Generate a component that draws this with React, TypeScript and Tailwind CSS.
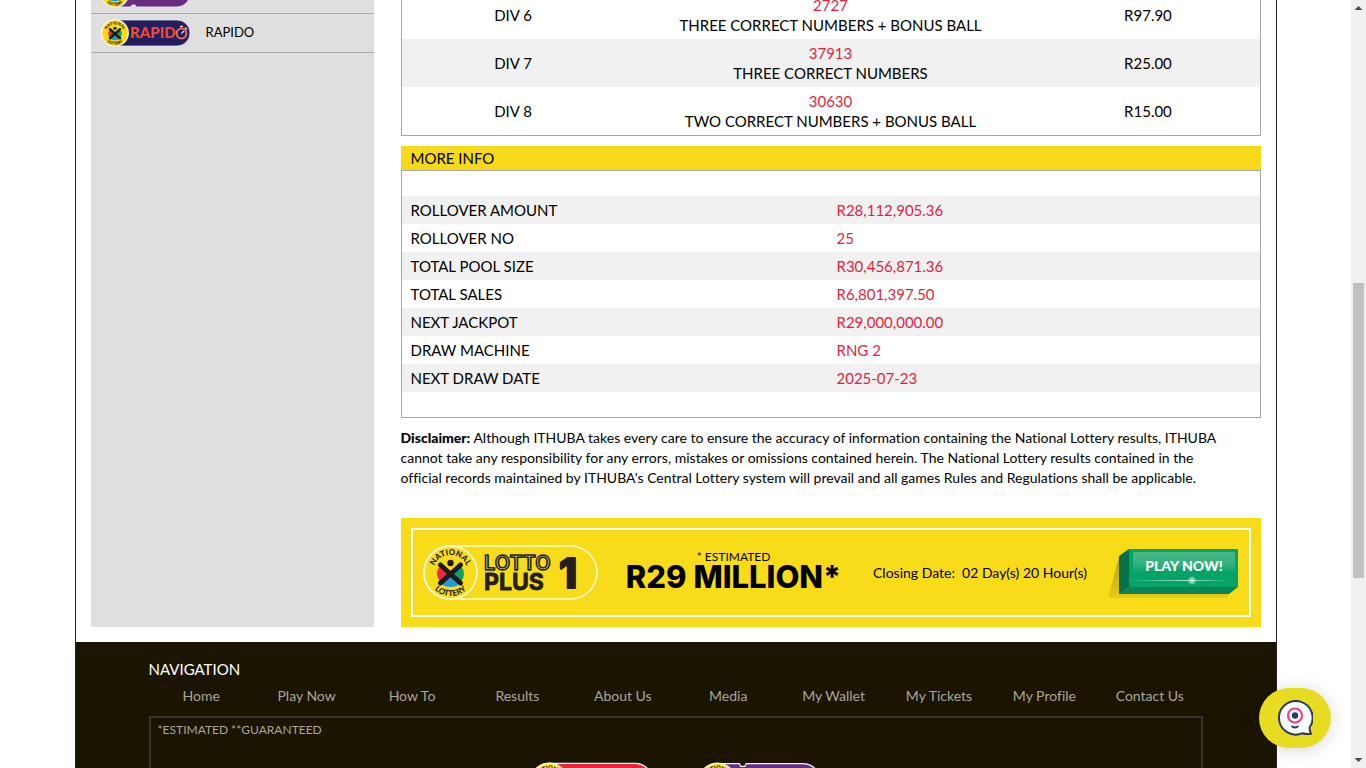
import React from "react";

const divisions = [
  { name: "DIV 6", winners: "2727", rule: "THREE CORRECT NUMBERS + BONUS BALL", prize: "R97.90" },
  { name: "DIV 7", winners: "37913", rule: "THREE CORRECT NUMBERS", prize: "R25.00" },
  { name: "DIV 8", winners: "30630", rule: "TWO CORRECT NUMBERS + BONUS BALL", prize: "R15.00" },
];

const info = [
  ["ROLLOVER AMOUNT", "R28,112,905.36"],
  ["ROLLOVER NO", "25"],
  ["TOTAL POOL SIZE", "R30,456,871.36"],
  ["TOTAL SALES", "R6,801,397.50"],
  ["NEXT JACKPOT", "R29,000,000.00"],
  ["DRAW MACHINE", "RNG 2"],
  ["NEXT DRAW DATE", "2025-07-23"],
];

const navItems = [
  "Home", "Play Now", "How To", "Results", "About Us",
  "Media", "My Wallet", "My Tickets", "My Profile", "Contact Us",
];

/* National Lottery emblem, drawn around the origin with a radius of 27. */
function Emblem({ id, fill, ring }: { id: string; fill: string; ring: number }) {
  return (
    <g>
      <circle r="26.5" fill={fill} stroke="#fffbe0" strokeWidth={ring} />
      <path d="M-2 1L-10-7Q-17 1-10 10Z" fill="#ee2a45" />
      <path d="M2 1L10-7Q17 1 10 10Z" fill="#0ba36b" />
      <path d="M0 4L-9 12Q0 17 9 12Z" fill="#1f9ad6" />
      <path d="M-10-7.5L10 10.5M10-7.5L-10 10.5" stroke="#1d1b1a" strokeWidth="5" strokeLinecap="round" />
      <circle cy="-9.5" r="3.2" fill="#1d1b1a" />
      <path id={`${id}-top`} d="M-17.5 0A17.5 17.5 0 0 1 17.5 0" fill="none" />
      <path id={`${id}-bottom`} d="M-23.5 0A23.5 23.5 0 0 0 23.5 0" fill="none" />
      <g fontFamily="Lato, sans-serif" fontWeight="900" fontSize="8" fill="#1d1b1a" textAnchor="middle">
        <text><textPath href={`#${id}-top`} startOffset="50%">NATIONAL</textPath></text>
        <text><textPath href={`#${id}-bottom`} startOffset="50%">LOTTERY</textPath></text>
      </g>
    </g>
  );
}

function RapidoLogo() {
  return (
    <svg className="h-[28px] w-[90px] shrink-0" viewBox="0 0 90 28" aria-label="Rapido">
      <path d="M14 1H76A13 13 0 0 1 76 27H14Z" fill="#231f5e" stroke="#f1eff5" strokeWidth=".7" />
      <g transform="translate(14 14) scale(.5)"><Emblem id="rapido" fill="#f7d917" ring={2.5} /></g>
      <text x="29" y="19" fontFamily="Lato, sans-serif" fontWeight="900" fontSize="15" fill="#f04a30">RAPID</text>
      <circle cx="80.5" cy="14.5" r="4.9" fill="none" stroke="#ee6a50" strokeWidth="2" />
      <path d="M79 7.5H82M84 8.5L86 10.5M80.5 14.5L83 12" stroke="#f3d5d0" strokeWidth="1.3" />
    </svg>
  );
}

function PurpleLogo({ id, className }: { id: string; className: string }) {
  return (
    <svg className={className} viewBox="0 0 90 28" aria-hidden="true">
      <path d="M14 1H30L31 3H34L35 1H76A13 13 0 0 1 76 27H35L34 25H31L30 27H14Z" fill="#662d83" stroke="#f1eff5" strokeWidth=".9" />
      <g transform="translate(14 14) scale(.5)"><Emblem id={id} fill="#f7d917" ring={2.5} /></g>
    </svg>
  );
}

function RedLogo({ className }: { className: string }) {
  return (
    <svg className={className} viewBox="0 0 90 28" aria-hidden="true">
      <rect x=".7" y=".9" width="88.6" height="26.2" rx="13.1" fill="#ea2236" stroke="#fff" strokeWidth=".9" />
      <g transform="translate(14 14) scale(.5)"><Emblem id="red" fill="#ffe512" ring={2.5} /></g>
    </svg>
  );
}

function LottoPlusLogo() {
  return (
    <svg className="h-[55px] w-[175px] shrink-0" viewBox="0 0 175 55" aria-label="Lotto Plus 1">
      <rect x="1" y="1" width="173" height="53" rx="26.5" fill="none" stroke="#fffbd5" strokeWidth="1.6" />
      <g transform="translate(27.5 27.5)"><Emblem id="lotto" fill="none" ring={1.6} /></g>
      <g fontFamily="Inter, sans-serif" stroke="#231f20" strokeLinejoin="round">
        <text x="61" y="24.5" fontSize="20" fontWeight="600" fill="#c9bd72" strokeWidth="1.5">LOTTO</text>
        <text x="61" y="44.5" fontSize="23" fontWeight="700" fill="#231f20" strokeWidth=".8">PLUS</text>
        <text x="136" y="43" fontSize="41" fontWeight="800" fill="#231f20" strokeWidth="2">1</text>
      </g>
    </svg>
  );
}

function PlayNow() {
  return (
    <button type="button" aria-label="Play now" className="shrink-0 cursor-pointer">
      <svg className="block h-[50px] w-[130px]" viewBox="0 0 130 50">
        <defs>
          <linearGradient id="play-shine" x2="0" y2="1">
            <stop stopColor="#49b98a" />
            <stop offset=".55" stopColor="#32b07c" />
            <stop offset="1" stopColor="#04a466" />
          </linearGradient>
          <linearGradient id="play-line">
            <stop stopColor="#fff" stopOpacity="0" />
            <stop offset=".6" stopColor="#fff" />
            <stop offset="1" stopColor="#fff" stopOpacity="0" />
          </linearGradient>
          <linearGradient id="play-shadow" x2="0" y2="1">
            <stop stopColor="#bd9d16" />
            <stop offset="1" stopColor="#e6cb18" />
          </linearGradient>
          <radialGradient id="play-glow">
            <stop stopColor="#fff" />
            <stop offset=".4" stopColor="#a5e6c9" stopOpacity=".8" />
            <stop offset="1" stopColor="#fff" stopOpacity="0" />
          </radialGradient>
        </defs>
        <path d="M10 9L-1 50H119V45Z" fill="url(#play-shadow)" />
        <path d="M20 1L10 8V46L20 39Z" fill="#06704a" />
        <path d="M20 39H129L120 46H10Z" fill="#0a8452" />
        <path d="M20 1H129V39H20Z" fill="#04a466" />
        <path d="M24 4H126V24Q75 18 24 26Z" fill="url(#play-shine)" />
        <rect x="16" y="32" width="106" height="1" fill="url(#play-line)" opacity=".7" />
        <circle cx="83" cy="32.5" r="4.5" fill="url(#play-glow)" />
        <text x="75" y="23" textAnchor="middle" fill="#fff" fontFamily="Lato, sans-serif" fontWeight="900" fontSize="14">PLAY NOW!</text>
      </svg>
    </button>
  );
}

function Scrollbar() {
  return (
    <div aria-hidden="true" className="flex w-[15px] shrink-0 flex-col items-center bg-[#f0f0f0]">
      <svg className="h-[15px] w-[15px] shrink-0" viewBox="0 0 15 15"><path d="M3.5 10L7.5 6L11.5 10Z" fill="#4d4d4d" /></svg>
      <div className="flex w-[11px] flex-1 flex-col">
        <div className="flex-[268]" />
        <div className="flex-[295] bg-[#c1c1c1]" />
        <div className="flex-[175]" />
      </div>
      <svg className="h-[15px] w-[15px] shrink-0" viewBox="0 0 15 15"><path d="M3.5 5L7.5 9L11.5 5Z" fill="#4d4d4d" /></svg>
    </div>
  );
}

export default function App() {
  return (
    <div className="flex h-screen overflow-hidden bg-white font-[Lato,sans-serif] text-black [font-variant-ligatures:none]">
      <div className="min-w-0 flex-1">
        <div className="mx-auto -mt-[26px] max-w-[1202px] border-x border-[#262626]">
          <div className="flex gap-[27px] px-[15px] pb-[15px]">
            <aside className="w-[283px] shrink-0 bg-[#dfdfdf] text-[13px]">
              <ul>
                <li className="flex h-[40px] items-center border-b border-[#aaa] px-[10px]">
                  <PurpleLogo id="side" className="h-[28px] w-[90px] shrink-0" />
                </li>
                <li className="border-b border-[#aaa]">
                  <a href="#rapido" className="flex h-[38px] items-center gap-[15px] px-[10px]">
                    <RapidoLogo />
                    RAPIDO
                  </a>
                </li>
              </ul>
            </aside>

            <main className="min-w-0 flex-1 pt-[17px]">
              <div className="border border-t-0 border-[#a6a6a6]">
                <table className="w-full table-fixed text-center text-[15px] leading-[20px]">
                  <tbody>
                    {divisions.map((d) => (
                      <tr key={d.name} className="h-[48px] even:bg-[#f1f1f1]">
                        <td className="w-[26%]">{d.name}</td>
                        <td>
                          <span className="block text-[#e21f3d]">{d.winners}</span>
                          {d.rule}
                        </td>
                        <td className="w-[26%]">{d.prize}</td>
                      </tr>
                    ))}
                  </tbody>
                </table>
              </div>

              <h2 className="mt-[10px] bg-[#f5d91a] px-[10px] text-[15px] leading-[24px]">MORE INFO</h2>
              <div className="border border-[#a6a6a6] py-[25px]">
                <table className="w-full table-fixed text-left text-[15px] leading-[20px]">
                  <tbody>
                    {info.map(([label, value]) => (
                      <tr key={label} className="h-[28px] odd:bg-[#f1f1f1]">
                        <th scope="row" className="w-1/2 pl-[9px] font-normal">{label}</th>
                        <td className="pl-[6px] text-[#e21f3d]">{value}</td>
                      </tr>
                    ))}
                  </tbody>
                </table>
              </div>

              <p className="mt-[10px] pr-[32px] text-[14px] leading-[20px]">
                <strong className="font-black">Disclaimer:</strong> Although ITHUBA takes every care to ensure the
                accuracy of information containing the National Lottery results, ITHUBA cannot take any responsibility
                for any errors, mistakes or omissions contained herein. The National Lottery results contained in the
                official records maintained by ITHUBA's Central Lottery system will prevail and all games Rules and
                Regulations shall be applicable.
              </p>

              <section className="mt-[30px] bg-[#f8dc1a] p-[10px]">
                <div className="flex h-[89px] items-center border-2 border-white px-[10px]">
                  <LottoPlusLogo />
                  <div className="w-[272px] shrink-0 text-center">
                    <div className="text-[12px] leading-[12px]">* ESTIMATED</div>
                    <div className="pb-[3px] font-[Inter,sans-serif] text-[31px] leading-[28px] font-extrabold">R29 MILLION*</div>
                  </div>
                  <div className="flex-1 pr-[18px] text-center text-[14px]">Closing Date: &nbsp;02 Day(s) 20 Hour(s)</div>
                  <PlayNow />
                </div>
              </section>
            </main>
          </div>

          <footer className="bg-[#1a1400] px-[73px] pt-[17px]">
            <h2 className="text-[15px] leading-[20px] text-white">NAVIGATION</h2>
            <nav className="mt-[7px] grid grid-cols-10 text-center text-[14px] leading-[20px] text-[#aaa699]">
              {navItems.map((item) => (
                <a key={item} href="#nav">{item}</a>
              ))}
            </nav>
            <div className="mt-[10px] h-[120px] border-2 border-[#333333] px-[7px] pt-[4px] text-[12px] leading-[16px] text-[#aaa699]">
              <p>*ESTIMATED **GUARANTEED</p>
              <div className="mt-[24px] flex justify-center gap-[44px]">
                <RedLogo className="h-[39px] w-[124px]" />
                <PurpleLogo id="foot" className="h-[39px] w-[124px]" />
              </div>
            </div>
          </footer>
        </div>
      </div>
      <Scrollbar />

      <button
        type="button"
        aria-label="Open chat"
        className="fixed right-[35px] bottom-[20px] flex h-[60px] w-[72px] items-center justify-center rounded-[30px] bg-[#e8dc23] shadow-[0_2px_18px_rgba(0,0,0,0.16)]"
      >
        <svg className="h-[36px] w-[36px]" viewBox="0 0 36 36" fill="none" strokeLinecap="round" strokeLinejoin="round">
          <path d="M25.5 33.2A16.8 16.8 0 1 1 32.5 27.5Q32.5 31 34 33.8Q29 34.6 25.5 33.2Z" fill="#fff" stroke="#2c3a59" strokeWidth="2" />
          <circle cx="18" cy="15.5" r="7" stroke="#f04479" strokeWidth="2.2" />
          <circle cx="18" cy="15.5" r="3.2" fill="#2c3a59" />
          <path d="M15.2 26.5Q18 28.5 20.8 26.5" stroke="#2c3a59" strokeWidth="2" />
        </svg>
      </button>
    </div>
  );
}
